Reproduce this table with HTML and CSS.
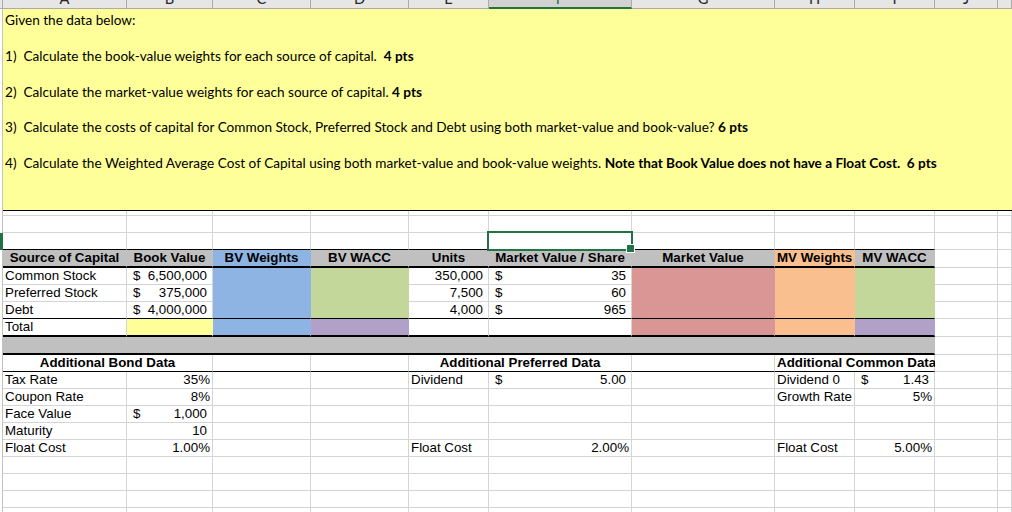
FILE: index.html
```html
<!DOCTYPE html>
<html>
<head>
<meta charset="utf-8">
<link rel="stylesheet" href="styles.css">
</head>
<body>
<div class="sheet">
  <div class="row colhead">
    <div class="rh"></div>
    <div class="col"><span>A</span></div>
    <div class="col"><span>B</span></div>
    <div class="col"><span>C</span></div>
    <div class="col"><span>D</span></div>
    <div class="col"><span>E</span></div>
    <div class="col on"><span>F</span></div>
    <div class="col"><span>G</span></div>
    <div class="col"><span>H</span></div>
    <div class="col"><span>I</span></div>
    <div class="col"><span>J</span></div>
    <div class="col"></div>
  </div>

  <div class="row intro">
    <div class="rh"></div>
    <div class="note">
      <p>Given the data below:</p>
      <p>1)  Calculate the book-value weights for each source of capital.  <b>4 pts</b></p>
      <p>2)  Calculate the market-value weights for each source of capital. <b>4 pts</b></p>
      <p>3)  Calculate the costs of capital for Common Stock, Preferred Stock and Debt using both market-value and book-value? <b>6 pts</b></p>
      <p>4)  Calculate the Weighted Average Cost of Capital using both market-value and book-value weights. <b>Note that Book Value does not have a Float Cost.  6 pts</b></p>
    </div>
  </div>

  <div class="row thin">
    <div class="rh"></div>
    <div class="cell"></div><div class="cell"></div><div class="cell"></div><div class="cell"></div><div class="cell"></div><div class="cell"></div><div class="cell"></div><div class="cell"></div><div class="cell"></div><div class="cell"></div><div class="cell"></div>
  </div>

  <div class="row">
    <div class="rh"></div>
    <div class="cell"></div><div class="cell"></div><div class="cell"></div><div class="cell"></div><div class="cell"></div><div class="cell"></div><div class="cell"></div><div class="cell"></div><div class="cell"></div><div class="cell"></div><div class="cell"></div>
  </div>

  <div class="row bb1">
    <div class="rh sel"></div>
    <div class="cell"></div><div class="cell"></div><div class="cell"></div><div class="cell"></div><div class="cell"></div>
    <div class="cell active"></div>
    <div class="cell"></div><div class="cell"></div><div class="cell"></div>
    <div class="cell x"></div><div class="cell x"></div>
  </div>

  <div class="row hd bb2">
    <div class="rh"></div>
    <div class="cell gray c">Source of Capital</div>
    <div class="cell gray c">Book Value</div>
    <div class="cell blue c">BV Weights</div>
    <div class="cell gray c">BV WACC</div>
    <div class="cell gray c">Units</div>
    <div class="cell gray c">Market Value / Share</div>
    <div class="cell gray c">Market Value</div>
    <div class="cell orange c">MV Weights</div>
    <div class="cell gray c">MV WACC</div>
    <div class="cell x"></div><div class="cell x"></div>
  </div>

  <div class="row">
    <div class="rh"></div>
    <div class="cell">Common Stock</div>
    <div class="cell acc"><span>$</span><span>6,500,000</span></div>
    <div class="cell blue"></div>
    <div class="cell green"></div>
    <div class="cell r6">350,000</div>
    <div class="cell acc"><span>$</span><span>35</span></div>
    <div class="cell pink"></div>
    <div class="cell orange"></div>
    <div class="cell green"></div>
    <div class="cell x"></div><div class="cell x"></div>
  </div>

  <div class="row">
    <div class="rh"></div>
    <div class="cell">Preferred Stock</div>
    <div class="cell acc"><span>$</span><span>375,000</span></div>
    <div class="cell blue"></div>
    <div class="cell green"></div>
    <div class="cell r6">7,500</div>
    <div class="cell acc"><span>$</span><span>60</span></div>
    <div class="cell pink"></div>
    <div class="cell orange"></div>
    <div class="cell green"></div>
    <div class="cell x"></div><div class="cell x"></div>
  </div>

  <div class="row bb1">
    <div class="rh"></div>
    <div class="cell">Debt</div>
    <div class="cell acc"><span>$</span><span>4,000,000</span></div>
    <div class="cell blue"></div>
    <div class="cell green"></div>
    <div class="cell r6">4,000</div>
    <div class="cell acc"><span>$</span><span>965</span></div>
    <div class="cell pink"></div>
    <div class="cell orange"></div>
    <div class="cell green"></div>
    <div class="cell x"></div><div class="cell x"></div>
  </div>

  <div class="row tall bb2">
    <div class="rh"></div>
    <div class="cell">Total</div>
    <div class="cell yellow"></div>
    <div class="cell blue"></div>
    <div class="cell purple"></div>
    <div class="cell"></div>
    <div class="cell"></div>
    <div class="cell pink"></div>
    <div class="cell orange"></div>
    <div class="cell purple"></div>
    <div class="cell x"></div><div class="cell x"></div>
  </div>

  <div class="row tall bb2">
    <div class="rh"></div>
    <div class="cell gray span9"></div>
    <div class="cell x"></div><div class="cell x"></div>
  </div>

  <div class="row bb1">
    <div class="rh"></div>
    <div class="cell span2 c b">Additional Bond Data</div>
    <div class="cell"></div>
    <div class="cell"></div>
    <div class="cell span2 c b">Additional Preferred Data</div>
    <div class="cell"></div>
    <div class="cell span2 c b">Additional Common Data</div>
    <div class="cell x"></div><div class="cell x"></div>
  </div>

  <div class="row">
    <div class="rh"></div>
    <div class="cell">Tax Rate</div>
    <div class="cell r">35%</div>
    <div class="cell"></div>
    <div class="cell"></div>
    <div class="cell">Dividend</div>
    <div class="cell acc"><span>$</span><span>5.00</span></div>
    <div class="cell"></div>
    <div class="cell">Dividend 0</div>
    <div class="cell acc"><span>$</span><span>1.43</span></div>
    <div class="cell"></div><div class="cell"></div>
  </div>

  <div class="row">
    <div class="rh"></div>
    <div class="cell">Coupon Rate</div>
    <div class="cell r">8%</div>
    <div class="cell"></div>
    <div class="cell"></div>
    <div class="cell"></div>
    <div class="cell"></div>
    <div class="cell"></div>
    <div class="cell">Growth Rate</div>
    <div class="cell r">5%</div>
    <div class="cell"></div><div class="cell"></div>
  </div>

  <div class="row">
    <div class="rh"></div>
    <div class="cell">Face Value</div>
    <div class="cell acc"><span>$</span><span>1,000</span></div>
    <div class="cell"></div><div class="cell"></div><div class="cell"></div><div class="cell"></div><div class="cell"></div><div class="cell"></div><div class="cell"></div><div class="cell"></div><div class="cell"></div>
  </div>

  <div class="row">
    <div class="rh"></div>
    <div class="cell">Maturity</div>
    <div class="cell r6">10</div>
    <div class="cell"></div><div class="cell"></div><div class="cell"></div><div class="cell"></div><div class="cell"></div><div class="cell"></div><div class="cell"></div><div class="cell"></div><div class="cell"></div>
  </div>

  <div class="row">
    <div class="rh"></div>
    <div class="cell">Float Cost</div>
    <div class="cell r">1.00%</div>
    <div class="cell"></div>
    <div class="cell"></div>
    <div class="cell">Float Cost</div>
    <div class="cell r">2.00%</div>
    <div class="cell"></div>
    <div class="cell">Float Cost</div>
    <div class="cell r">5.00%</div>
    <div class="cell"></div><div class="cell"></div>
  </div>

  <div class="row">
    <div class="rh"></div>
    <div class="cell"></div><div class="cell"></div><div class="cell"></div><div class="cell"></div><div class="cell"></div><div class="cell"></div><div class="cell"></div><div class="cell"></div><div class="cell"></div><div class="cell"></div><div class="cell"></div>
  </div>
  <div class="row">
    <div class="rh"></div>
    <div class="cell"></div><div class="cell"></div><div class="cell"></div><div class="cell"></div><div class="cell"></div><div class="cell"></div><div class="cell"></div><div class="cell"></div><div class="cell"></div><div class="cell"></div><div class="cell"></div>
  </div>
  <div class="row">
    <div class="rh"></div>
    <div class="cell"></div><div class="cell"></div><div class="cell"></div><div class="cell"></div><div class="cell"></div><div class="cell"></div><div class="cell"></div><div class="cell"></div><div class="cell"></div><div class="cell"></div><div class="cell"></div>
  </div>
  <div class="row">
    <div class="rh"></div>
    <div class="cell"></div><div class="cell"></div><div class="cell"></div><div class="cell"></div><div class="cell"></div><div class="cell"></div><div class="cell"></div><div class="cell"></div><div class="cell"></div><div class="cell"></div><div class="cell"></div>
  </div>
</div>
</body>
</html>
```

FILE: styles.css
```css
* { box-sizing: border-box; margin: 0; padding: 0; }

body {
  margin: 0;
  width: 1012px;
  height: 512px;
  overflow: hidden;
  background: #fff;
  color: #000;
  font-family: "Liberation Sans", Arial, sans-serif;
  font-size: 13.33px;
}

.sheet { display: flex; flex-direction: column; }

.row {
  display: grid;
  grid-template-columns: 3px 124px 86px 98px 98px 80px 143px 143px 80px 80px 63px 1fr;
  height: 17px;
  flex: none;
}
.row.thin { height: 5px; }
.row.tall { height: 18px; }
.row.hd { height: 18px; }
.row.intro { height: 202px; }
.row.colhead { height: 9px; }

.rh { background: #fff; border-right: 1px solid #c2c2c2; }
.rh.sel { background: #217346; border-right-color: #217346; }

/* column letters */
.colhead .rh { background: #e6e6e6; border-right: 1px solid #ababab; border-bottom: 1px solid #ababab; }
.col {
  background: #e6e6e6;
  border-right: 1px solid #ababab;
  border-bottom: 1px solid #ababab;
  overflow: hidden;
  text-align: center;
  font-family: Lato, Carlito, Calibri, sans-serif;
  font-size: 14.67px;
  line-height: 18px;
  color: #262626;
}
.col span { display: block; margin-top: -10px; }
.col.on { background: #d2d2d2; border-bottom: 2px solid #217346; color: #217346; }

/* instructions block */
.note {
  grid-column: 2 / -1;
  background: #ffff99;
  border-bottom: 1px solid #000;
  font-family: Lato, Carlito, Calibri, sans-serif;
  font-size: 13.6px;
  line-height: 17.9px;
  padding: 3px 0 0 2px;
  display: flex;
  flex-direction: column;
  gap: 17.9px;
}
.note p { white-space: pre; }
.note b { font-weight: bold; }

/* cells */
.cell {
  background: #fff;
  border-right: 1px solid #d4d4d4;
  border-bottom: 1px solid #d4d4d4;
  line-height: 16px;
  white-space: nowrap;
  padding: 0 2px;
}
.c { text-align: center; }
.b { font-weight: bold; }
.r { text-align: right; }
.r6 { text-align: right; padding-right: 5px; }
.acc { display: flex; justify-content: space-between; padding: 0 5px 0 6px; }
.span2 { grid-column: span 2; }
.span9 { grid-column: span 9; }

.hd .cell { font-weight: bold; }

.gray   { background: #c0c0c0; border-color: #c0c0c0; }
.blue   { background: #8db4e2; border-color: #8db4e2; }
.green  { background: #c4d79b; border-color: #c4d79b; }
.pink   { background: #da9694; border-color: #da9694; }
.orange { background: #fabf8f; border-color: #fabf8f; }
.purple { background: #b1a0c7; border-color: #b1a0c7; }
.yellow { background: #ffff99; border-color: #ffff99; }

.row.bb1 > .cell:not(.x) { border-bottom: 1px solid #000; }
.row.bb2 > .cell:not(.x) { border-bottom: 2px solid #000; }

/* active cell selection */
.cell.active { position: relative; }
.cell.active::after {
  content: "";
  position: absolute;
  left: -2px;
  top: -2px;
  right: -2px;
  bottom: -2px;
  border: 2px solid #217346;
}
.cell.active::before {
  content: "";
  position: absolute;
  right: -4px;
  bottom: -4px;
  width: 7px;
  height: 7px;
  background: #217346;
  border: 1px solid #fff;
  z-index: 1;
}
```
